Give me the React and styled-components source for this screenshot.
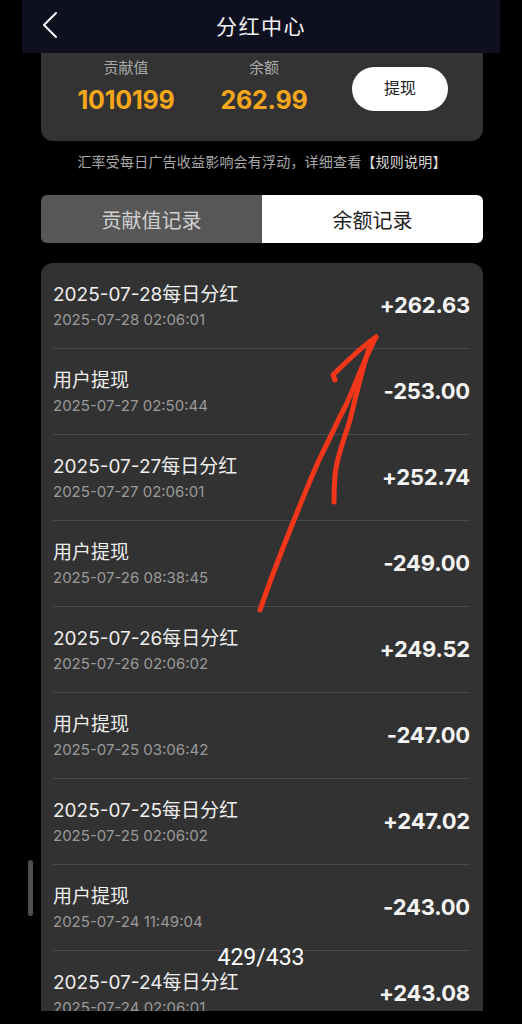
import styled, { createGlobalStyle } from 'styled-components';

const GlobalStyle = createGlobalStyle`
  html, body {
    margin: 0;
    padding: 0;
    background: #000;
  }
  body {
    font-family: "Inter", "Noto Sans CJK SC", sans-serif;
    -webkit-font-smoothing: antialiased;
  }
`;

const records = [
    { title: '2025-07-28每日分红', time: '2025-07-28 02:06:01', amount: '+262.63' },
    { title: '用户提现', time: '2025-07-27 02:50:44', amount: '-253.00' },
    { title: '2025-07-27每日分红', time: '2025-07-27 02:06:01', amount: '+252.74' },
    { title: '用户提现', time: '2025-07-26 08:38:45', amount: '-249.00' },
    { title: '2025-07-26每日分红', time: '2025-07-26 02:06:02', amount: '+249.52' },
    { title: '用户提现', time: '2025-07-25 03:06:42', amount: '-247.00' },
    { title: '2025-07-25每日分红', time: '2025-07-25 02:06:02', amount: '+247.02' },
    { title: '用户提现', time: '2025-07-24 11:49:04', amount: '-243.00' },
    { title: '2025-07-24每日分红', time: '2025-07-24 02:06:01', amount: '+243.08' },
];

const App = () => {
    return (
        <>
            <GlobalStyle />
            <Page>
                <Header>
                    <BackButton aria-label="返回">
                        <svg width="18" height="28" viewBox="0 0 18 28" fill="none">
                            <path d="M15 2 L3 14 L15 26" stroke="#fff" strokeWidth="2" strokeLinecap="round" strokeLinejoin="round" />
                        </svg>
                    </BackButton>
                    <Title>分红中心</Title>
                </Header>

                <Content>
                    <Summary>
                        <Stat>
                            <StatLabel>贡献值</StatLabel>
                            <StatValue>1010199</StatValue>
                        </Stat>
                        <Stat>
                            <StatLabel>余额</StatLabel>
                            <StatValue>262.99</StatValue>
                        </Stat>
                        <WithdrawButton>提现</WithdrawButton>
                    </Summary>

                    <Note>
                        汇率受每日广告收益影响会有浮动，详细查看<RuleLink>【规则说明】</RuleLink>
                    </Note>

                    <Tabs>
                        <Tab>贡献值记录</Tab>
                        <Tab $active>余额记录</Tab>
                    </Tabs>

                    <ListViewport>
                        <List>
                            {records.map((r, i) => (
                                <Row key={i}>
                                    <RowText>
                                        <RowTitle>{r.title}</RowTitle>
                                        <RowTime>{r.time}</RowTime>
                                    </RowText>
                                    <Amount>{r.amount}</Amount>
                                </Row>
                            ))}
                        </List>
                    </ListViewport>
                </Content>

                <ScrollThumb />
                <PageCounter>429/433</PageCounter>

                <Annotation width="522" height="1024" viewBox="0 0 522 1024">
                    <path
                        d="M260 610 C 272 575, 282 550, 292 525 C 302 500, 312 475, 320 458 C 330 438, 338 420, 346 405 C 354 388, 364 360, 376 337"
                        stroke="#f2361a" strokeWidth="5" fill="none" strokeLinecap="round" strokeLinejoin="round" />
                    <path
                        d="M335 380 L 333 375 C 346 362, 360 348, 376 337"
                        stroke="#f2361a" strokeWidth="5" fill="none" strokeLinecap="round" strokeLinejoin="round" />
                    <path
                        d="M370 345 C 362 370, 356 395, 350 420 C 344 440, 337 455, 335 475 C 334 488, 334 495, 334 502"
                        stroke="#f2361a" strokeWidth="5" fill="none" strokeLinecap="round" strokeLinejoin="round" />
                </Annotation>
            </Page>
        </>
    );
};

const Page = styled.div`
    position: relative;
    width: 522px;
    height: 1024px;
    overflow: hidden;
    background: #000;
`;

const Header = styled.header`
    position: relative;
    z-index: 2;
    margin: 0 22px;
    height: 53px;
    background: #0e1020;
    display: flex;
    align-items: center;
    justify-content: center;
`;

const BackButton = styled.button`
    position: absolute;
    left: 18px;
    top: 11px;
    width: 20px;
    height: 28px;
    padding: 0;
    border: 0;
    background: none;
    display: flex;
    align-items: center;
    justify-content: center;
`;

const Title = styled.h1`
    margin: 0 0 4px;
    font-size: 21px;
    font-weight: 400;
    color: #f2f2f2;
    letter-spacing: 1.5px;
    font-family: "Noto Sans CJK SC", sans-serif;
`;

const Content = styled.main`
    margin: 0 39px 0 41px;
    display: flex;
    flex-direction: column;
`;

const Summary = styled.section`
    display: grid;
    grid-template-columns: 170px 106px auto;
    align-items: center;
    height: 88px;
    box-sizing: border-box;
    padding: 0 0 22px;
    background: #333333;
    border-radius: 0 0 12px 12px;
`;

const Stat = styled.div`
    display: flex;
    flex-direction: column;
    align-items: center;
    gap: 8px;
`;

const StatLabel = styled.span`
    font-size: 15px;
    line-height: 20px;
    color: #a8a8a8;
    font-family: "Noto Sans CJK SC", sans-serif;
`;

const StatValue = styled.span`
    font-size: 25px;
    line-height: 30px;
    font-weight: 700;
    color: #f7a71c;
    letter-spacing: -0.2px;
`;

const WithdrawButton = styled.button`
    justify-self: start;
    margin-left: 35px;
    margin-top: 6px;
    width: 96px;
    height: 44px;
    border: 0;
    border-radius: 22px;
    background: #fff;
    color: #222;
    font-size: 16px;
    font-family: "Noto Sans CJK SC", sans-serif;
    padding: 0 0 4px;
`;

const Note = styled.p`
    margin: 10px 0 0;
    text-align: center;
    font-size: 14px;
    line-height: 20px;
    color: #a8a8a8;
    font-family: "Noto Sans CJK SC", sans-serif;
    letter-spacing: 0.2px;
`;

const RuleLink = styled.span`
    color: #d8d8d8;
`;

const Tabs = styled.div`
    margin-top: 24px;
    display: grid;
    grid-template-columns: 1fr 1fr;
    height: 48px;
    border-radius: 6px;
    overflow: hidden;
`;

const Tab = styled.div`
    display: flex;
    align-items: center;
    justify-content: center;
    font-size: 20px;
    font-family: "Noto Sans CJK SC", sans-serif;
    background: ${p => (p.$active ? '#ffffff' : '#575757')};
    color: ${p => (p.$active ? '#222222' : '#cfcfcf')};
`;

const ListViewport = styled.div`
    margin-top: 20px;
    height: 748px;
    overflow: hidden;
`;

const List = styled.section`
    background: #323232;
    border-radius: 12px;
    padding-bottom: 40px;
`;

const Row = styled.div`
    display: flex;
    align-items: center;
    justify-content: space-between;
    margin: 0 13px 0 12px;
    padding: 19px 0 17px;
    border-bottom: 1px solid #4a4a4a;
    height: 86px;
    box-sizing: border-box;
`;

const RowText = styled.div`
    display: flex;
    flex-direction: column;
    gap: 2px;
`;

const RowTitle = styled.span`
    font-size: 19px;
    line-height: 24px;
    color: #eeeeee;
`;

const RowTime = styled.span`
    font-size: 15px;
    line-height: 22px;
    color: #9a9a9a;
`;

const Amount = styled.span`
    font-size: 22px;
    font-weight: 700;
    color: #f4f4f4;
    letter-spacing: -0.2px;
    margin-top: -3px;
`;

const ScrollThumb = styled.div`
    position: absolute;
    left: 28px;
    top: 860px;
    width: 5px;
    height: 56px;
    border-radius: 3px;
    background: #4f4f4f;
`;

const PageCounter = styled.div`
    position: absolute;
    left: 0;
    right: 0;
    top: 944px;
    text-align: center;
    font-family: Roboto, sans-serif;
    font-size: 23px;
    line-height: 28px;
    color: #fff;
`;

const Annotation = styled.svg`
    position: absolute;
    left: 0;
    top: 0;
    pointer-events: none;
`;

export default App;
